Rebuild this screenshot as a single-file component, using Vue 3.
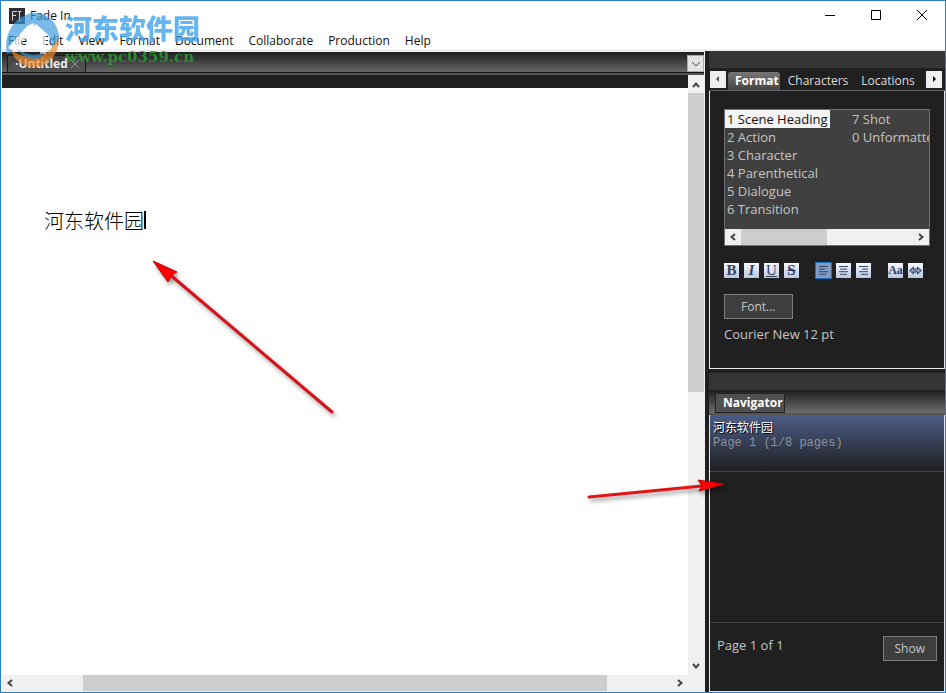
<script setup>
import {computed, ref} from "vue";

/** Entries of the main menu bar */
const menus = ["File", "Edit", "View", "Format", "Document", "Collaborate", "Production", "Help"];

/** Tabs of the upper side panel */
const tabs = ["Format", "Characters", "Locations"];
const activeTab = ref("Format");

/** Paragraph styles, the number is the keyboard shortcut */
const elements = [
    "1 Scene Heading",
    "2 Action",
    "3 Character",
    "4 Parenthetical",
    "5 Dialogue",
    "6 Transition",
    "7 Shot",
    "0 Unformatted"
];
const activeElement = ref("1 Scene Heading");

const scriptText = ref("河东软件园");
const alignment = ref("left");

/** Line ends of the three alignment icons, one pair per text line */
const alignments = {
    left: [[3, 12], [3, 9], [3, 12], [3, 10]],
    center: [[3, 12], [4, 11], [3, 12], [4, 11]],
    right: [[3, 12], [6, 12], [3, 12], [5, 12]]
};

/** Scroll positions in percent of the track */
const vertical = ref({start: 0, size: 53});
const horizontal = ref({start: 10, size: 80});

const verticalThumb = computed(() => ({top: vertical.value.start + "%", height: vertical.value.size + "%"}));
const horizontalThumb = computed(() => ({left: horizontal.value.start + "%", width: horizontal.value.size + "%"}));
</script>

<template>
    <div class="window">
        <header class="titlebar">
            <svg class="app-icon" viewBox="0 0 16 16" aria-hidden="true">
                <rect width="16" height="16" fill="#2b2d33"/>
                <path d="M3.5 12.5v-9H8M3.5 7.5H7M10.5 3.500v9M9 3.500h3.500M9 12.500h3.500" fill="none" stroke="#d8d8d8"/>
            </svg>
            <span class="title">Fade In</span>
            <div class="window-buttons">
                <button aria-label="Minimize"><svg viewBox="0 0 12 12"><path d="M1 6.500h10"/></svg></button>
                <button aria-label="Maximize"><svg viewBox="0 0 12 12"><path d="M1.500 1.500h9v9h-9z"/></svg></button>
                <button aria-label="Close"><svg viewBox="0 0 12 12"><path d="M1 1l10 10M11 1L1 11"/></svg></button>
            </div>
        </header>

        <nav class="menubar">
            <button v-for="menu in menus" :key="menu">{{ menu }}</button>
        </nav>

        <div class="workspace">
            <main class="editor">
                <div class="doc-tabs">
                    <div class="doc-tab">
                        <span>·Untitled</span>
                        <button aria-label="Close tab"><svg viewBox="0 0 10 10"><path d="M1 1l8 8M9 1L1 9"/></svg></button>
                    </div>
                    <button class="tab-list" aria-label="List tabs">
                        <svg viewBox="0 0 10 10"><path d="M1 3l4 4 4-4"/></svg>
                    </button>
                </div>

                <div class="doc-area">
                    <div class="page-column">
                        <div class="ruler"></div>
                        <div class="page">
                            <input v-model="scriptText" class="script-line" aria-label="Script text">
                            <span class="caret"></span>
                        </div>
                    </div>
                    <div class="scroll vertical">
                        <button aria-label="Scroll up"><svg viewBox="0 0 10 10"><path d="M2 7l3-3.500L8 7"/></svg></button>
                        <div class="track"><div class="thumb" :style="verticalThumb"></div></div>
                        <button aria-label="Scroll down"><svg viewBox="0 0 10 10"><path d="M2 3l3 3.500L8 3"/></svg></button>
                    </div>
                </div>

                <div class="scroll horizontal">
                    <button aria-label="Scroll left"><svg viewBox="0 0 10 10"><path d="M7 2L3.500 5 7 8"/></svg></button>
                    <div class="track"><div class="thumb" :style="horizontalThumb"></div></div>
                    <button aria-label="Scroll right"><svg viewBox="0 0 10 10"><path d="M3 2l3.500 3L3 8"/></svg></button>
                </div>
            </main>

            <aside class="sidebar">
                <div class="grip"></div>
                <div class="side-tabs">
                    <button class="tab-arrow" aria-label="Previous tab"><svg viewBox="0 0 10 10"><path d="M6 2v6L3 5z" fill="#555"/></svg></button>
                    <div class="tab-strip">
                        <button
                            v-for="tab in tabs"
                            :key="tab"
                            class="side-tab"
                            :class="{active: tab === activeTab}"
                            @click="activeTab = tab"
                        >{{ tab }}</button>
                    </div>
                    <button class="tab-arrow" aria-label="Next tab"><svg viewBox="0 0 10 10"><path d="M4 2v6l3-3z" fill="#000"/></svg></button>
                </div>

                <section class="format-panel">
                    <div class="element-box">
                        <div class="element-list">
                            <button
                                v-for="element in elements"
                                :key="element"
                                :class="{selected: element === activeElement}"
                                @click="activeElement = element"
                            >{{ element }}</button>
                        </div>
                        <div class="scroll horizontal">
                            <button aria-label="Scroll left"><svg viewBox="0 0 10 10"><path d="M7 2L3.500 5 7 8"/></svg></button>
                            <div class="track"><div class="thumb half"></div></div>
                            <button aria-label="Scroll right"><svg viewBox="0 0 10 10"><path d="M3 2l3.500 3L3 8"/></svg></button>
                        </div>
                    </div>

                    <div class="toolbar">
                        <div class="tool-group">
                            <button class="bold" aria-label="Bold">B</button>
                            <button class="italic" aria-label="Italic">I</button>
                            <button class="underline" aria-label="Underline">U</button>
                            <button class="strike" aria-label="Strikethrough">S</button>
                        </div>
                        <div class="tool-group">
                            <button
                                v-for="(lines, name) in alignments"
                                :key="name"
                                :class="{pressed: name === alignment}"
                                :aria-label="'Align ' + name"
                                @click="alignment = name"
                            >
                                <svg viewBox="0 0 15 15">
                                    <path v-for="(line, i) in lines" :key="i" :d="`M${line[0]} ${3.5 + i * 2.6}H${line[1]}`"/>
                                </svg>
                            </button>
                        </div>
                        <div class="tool-group">
                            <button class="case" aria-label="Change case">Aa</button>
                            <button aria-label="Spacing">
                                <svg viewBox="0 0 15 15">
                                    <path d="M1.500 7.500l4-3.500v2h4v-2l4 3.500-4 3.500V9h-4v2z" class="spread"/>
                                </svg>
                            </button>
                        </div>
                    </div>

                    <button class="dark-button font-button">Font...</button>
                    <div class="font-name">Courier New 12 pt</div>
                </section>

                <div class="grip second"></div>
                <div class="navigator-tabs"><span>Navigator</span></div>
                <section class="navigator">
                    <div class="scene">
                        <div class="scene-title">河东软件园</div>
                        <div class="scene-pages">Page 1 (1/8 pages)</div>
                    </div>
                    <footer>
                        <span>Page 1 of 1</span>
                        <button class="dark-button">Show</button>
                    </footer>
                </section>
            </aside>
        </div>

        <!-- site mark over the top left corner -->
        <div class="sitemark">
            <svg viewBox="0 0 60 60" aria-hidden="true">
                <path d="M4 46C0 28 10 8 30 5c13-1 24 8 26 22 0 9-3 15-8 20 2-10 0-19-6-23l-9-8L9 44z" fill="#3b9ade"/>
                <path d="M8 42c10 8 28 9 38 1l10-12c0 14-9 26-23 28C20 60 11 52 8 42z" fill="#ef8a2c"/>
                <path d="M5 40l19-22 7-3v26h-7V28L11 43zM34 24h9v22h-6V30h-3z" fill="#fff"/>
                <path d="M14 41c8 6 18 7 26 4l-3 5c-9 2-17-1-23-9z" fill="#3b9ade"/>
            </svg>
            <div class="sitemark-text">
                <div class="sitemark-name">河东软件园</div>
                <div class="sitemark-url">www.pc0359.cn</div>
            </div>
        </div>

        <!-- callout arrows -->
        <svg class="arrow to-text" viewBox="0 0 184 156" aria-hidden="true">
            <path d="M16 13L180 152" stroke="#d3141c" stroke-width="3" stroke-linecap="round"/>
            <path d="M1 1l24 11-5 3-4 7z" fill="#f00" stroke="#c80000"/>
        </svg>
        <svg class="arrow to-navigator" viewBox="0 0 138 24" aria-hidden="true">
            <path d="M2 17L115 6" stroke="#e01414" stroke-width="3" stroke-linecap="round"/>
            <path d="M137 4l-25 7 3-5-4-6z" fill="#f00" stroke="#c80000"/>
        </svg>
    </div>
</template>

<style>
body {
    margin: 0;
}
</style>

<style scoped>
.window {
    position: relative;
    box-sizing: border-box;
    display: flex;
    flex-direction: column;
    height: 100vh;
    border: 1px solid #2d7fc1;
    background: white;
    color: #111;
    font: 12px/18px "Open Sans", "Noto Sans CJK SC", sans-serif;
    overflow: hidden;
}

button {
    display: flex;
    align-items: center;
    justify-content: center;
    padding: 0;
    border: 0;
    background: none;
    color: inherit;
    font: inherit;
    white-space: nowrap;
}

button svg {
    width: 10px;
    height: 10px;
    fill: none;
    stroke: #444;
}

/* title and menu */
.titlebar {
    display: flex;
    align-items: center;
    height: 30px;
    padding-left: 8px;
}

.app-icon {
    width: 16px;
    height: 16px;
    margin-right: 5px;
}

.window-buttons {
    display: flex;
    align-self: flex-start;
    margin-left: auto;
}

.window-buttons button {
    width: 46px;
    height: 28px;
}

.window-buttons svg {
    width: 12px;
    height: 12px;
    stroke: black;
}

.menubar {
    display: flex;
    gap: 15px;
    height: 17px;
    padding: 1px 0 0 7px;
    border-bottom: 2px solid #f0f0f0;
}

.workspace {
    display: flex;
    flex: 1;
    min-height: 0;
    background: #202020;
}

/* editor */
.editor {
    display: flex;
    flex: 1;
    flex-direction: column;
    min-width: 0;
    margin-right: 4px;
    padding: 1px;
    background: #f0f0f0;
}

.doc-tabs {
    box-sizing: border-box;
    display: flex;
    align-items: flex-end;
    justify-content: space-between;
    height: 21px;
    padding-left: 5px;
    border-bottom: 1px solid #151515;
    background: linear-gradient(#1e1e1e, #666);
    box-shadow: 0 2px #555;
    z-index: 1;
}

.doc-tab {
    display: flex;
    align-items: center;
    height: 16px;
    gap: 2px;
    padding: 0 5px 0 7px;
    border: 1px solid #1a1a1a;
    border-bottom: 0;
    background: linear-gradient(#444, #555);
    color: #eee;
    font-weight: bold;
}

.doc-tab svg {
    stroke: #999;
}

.tab-list {
    width: 17px;
    height: 17px;
    border: 1px solid #aaa;
    background: #e4e4e4;
}

.doc-area {
    display: flex;
    flex: 1;
    min-height: 0;
}

.page-column {
    display: flex;
    flex: 1;
    flex-direction: column;
    background: white;
}

.ruler {
    height: 15px;
    background: #202020;
}

.page {
    display: flex;
    align-items: center;
    padding: 122px 0 0 42px;
}

.script-line {
    width: 5em;
    height: 20px;
    padding: 0;
    border: 0;
    outline: 0;
    background: none;
    color: black;
    font: 300 20px/20px "Noto Sans CJK SC", sans-serif;
}

.caret {
    width: 2px;
    height: 18px;
    background: black;
}

.scroll {
    display: flex;
    background: #f0f0f0;
}

.scroll button {
    flex: none;
    width: 16px;
    height: 16px;
}

.scroll svg {
    stroke-width: 2;
}

.scroll.vertical {
    flex-direction: column;
    width: 16px;
    padding: 4px 0 1px;
}

.editor > .scroll.horizontal {
    padding-right: 16px;
}

.track {
    position: relative;
    flex: 1;
}

.thumb {
    position: absolute;
    background: #cdcdcd;
}

.vertical .thumb {
    width: 100%;
}

.horizontal .thumb {
    height: 100%;
}

.thumb.half {
    width: 50%;
}

/* side panels */
.sidebar {
    display: flex;
    flex: none;
    flex-direction: column;
    width: 236px;
    color: #c4c4c4;
}

.grip {
    height: 17px;
    background: #363636;
}

.side-tabs {
    display: flex;
    align-items: center;
    height: 22px;
    border-bottom: 1px solid #666;
    padding: 0 3px 0 1px;
}

.tab-arrow {
    flex: none;
    width: 16px;
    height: 17px;
    background: #eee;
}

.tab-arrow svg {
    stroke: none;
}

.tab-strip {
    display: flex;
    flex: 1;
    align-self: flex-end;
    padding-left: 2px;
}

.side-tab {
    height: 18px;
    padding: 0 5px 0 8px;
    color: #ddd;
}

.side-tab.active {
    padding: 0 1px 0 7px;
    border-radius: 3px 3px 0 0;
    background: linear-gradient(#777, #444);
    color: white;
    font-weight: bold;
}

.format-panel {
    box-sizing: border-box;
    height: 278px;
    padding: 18px 14px 0;
    border: 1px solid #e8e8e8;
    border-top: 0;
    font-size: 13px;
}

.element-box {
    border: 1px solid #707070;
    background: #404040;
}

.element-list {
    display: grid;
    grid-template-rows: repeat(6, 18px);
    grid-auto-flow: column;
    grid-auto-columns: 125px;
    justify-items: start;
    height: 119px;
    overflow: hidden;
}

.element-list button {
    padding: 0 2px;
}

.element-list .selected {
    background: #f4f4f4;
    color: #111;
}

.toolbar {
    display: flex;
    gap: 17px;
    margin-top: 17px;
}

.tool-group {
    display: flex;
    gap: 5px;
}

.toolbar button {
    box-sizing: border-box;
    width: 15px;
    height: 15px;
    background: linear-gradient(#f4f8ff, #b8c8e4);
    color: #33415c;
    font: bold 15px/15px "Liberation Serif", serif;
}

.toolbar svg {
    width: 15px;
    height: 15px;
    stroke: #3c4860;
}

.toolbar .spread {
    fill: #8290ac;
}

.toolbar .italic {
    font-style: italic;
}

.toolbar .underline {
    font-weight: normal;
    text-decoration: underline;
}

.toolbar .strike {
    text-decoration: line-through;
}

.toolbar .case {
    font-size: 12px;
}

.toolbar .pressed {
    background: #7e9cc4;
    outline: 1px solid #1d6fc4;
}

.dark-button {
    box-sizing: border-box;
    height: 25px;
    padding: 0 11px;
    border: 1px solid #7c7c7c;
    background: #3e3e3e;
    color: #c4c4c4;
    font-size: 12px;
}

.font-button {
    margin: 16px 0 6px;
    padding: 0 16px;
}

.grip.second {
    margin-top: 4px;
}

.navigator-tabs {
    box-sizing: border-box;
    display: flex;
    align-items: flex-end;
    height: 25px;
    padding-left: 6px;
    border-bottom: 2px solid #555;
    background: linear-gradient(#1e1e1e, #6c6c6c);
}

.navigator-tabs span {
    padding: 0 1px 0 7px;
    border: 1px solid #222;
    background: #505050;
    color: white;
    font-weight: bold;
}

.navigator {
    display: flex;
    flex: 1;
    flex-direction: column;
    border: 1px solid #e8e8e8;
    border-width: 0 1px 1px;
}

.scene {
    height: 52px;
    padding: 4px 3px 0;
    border-bottom: 1px solid #444;
    background: linear-gradient(#4c5d88, #202020);
}

.scene-title {
    color: white;
    text-shadow: 1px 1px black;
}

.scene-pages {
    color: #8d929c;
    font: 12px/12px "Liberation Mono", monospace;
}

footer {
    display: flex;
    align-items: flex-start;
    justify-content: space-between;
    box-sizing: border-box;
    height: 69px;
    margin-top: auto;
    padding: 13px 7px 0;
    border-top: 1px solid #444;
    font-size: 13px;
}

/* overlays */
.sitemark {
    position: absolute;
    z-index: 2;
    top: 7px;
    left: 2px;
    display: flex;
    gap: 2px;
    opacity: 0.8;
    pointer-events: none;
}

.sitemark > svg {
    width: 60px;
    height: 60px;
    opacity: 0.85;
}

.sitemark-name {
    padding-top: 6px;
    color: #3fa3ee;
    font: 900 27px/28px "Noto Sans CJK SC", sans-serif;
}

.sitemark-url {
    padding-top: 6px;
    color: #2f9e37;
    font: bold 15px/18px "DejaVu Serif", serif;
}

.arrow {
    position: absolute;
    overflow: visible;
    fill: none;
    filter: drop-shadow(2px 3px 2px rgba(0, 0, 0, 0.4));
    pointer-events: none;
}

.to-text {
    top: 259px;
    left: 151px;
    width: 184px;
}

.to-navigator {
    top: 479px;
    left: 586px;
    width: 138px;
}
</style>
